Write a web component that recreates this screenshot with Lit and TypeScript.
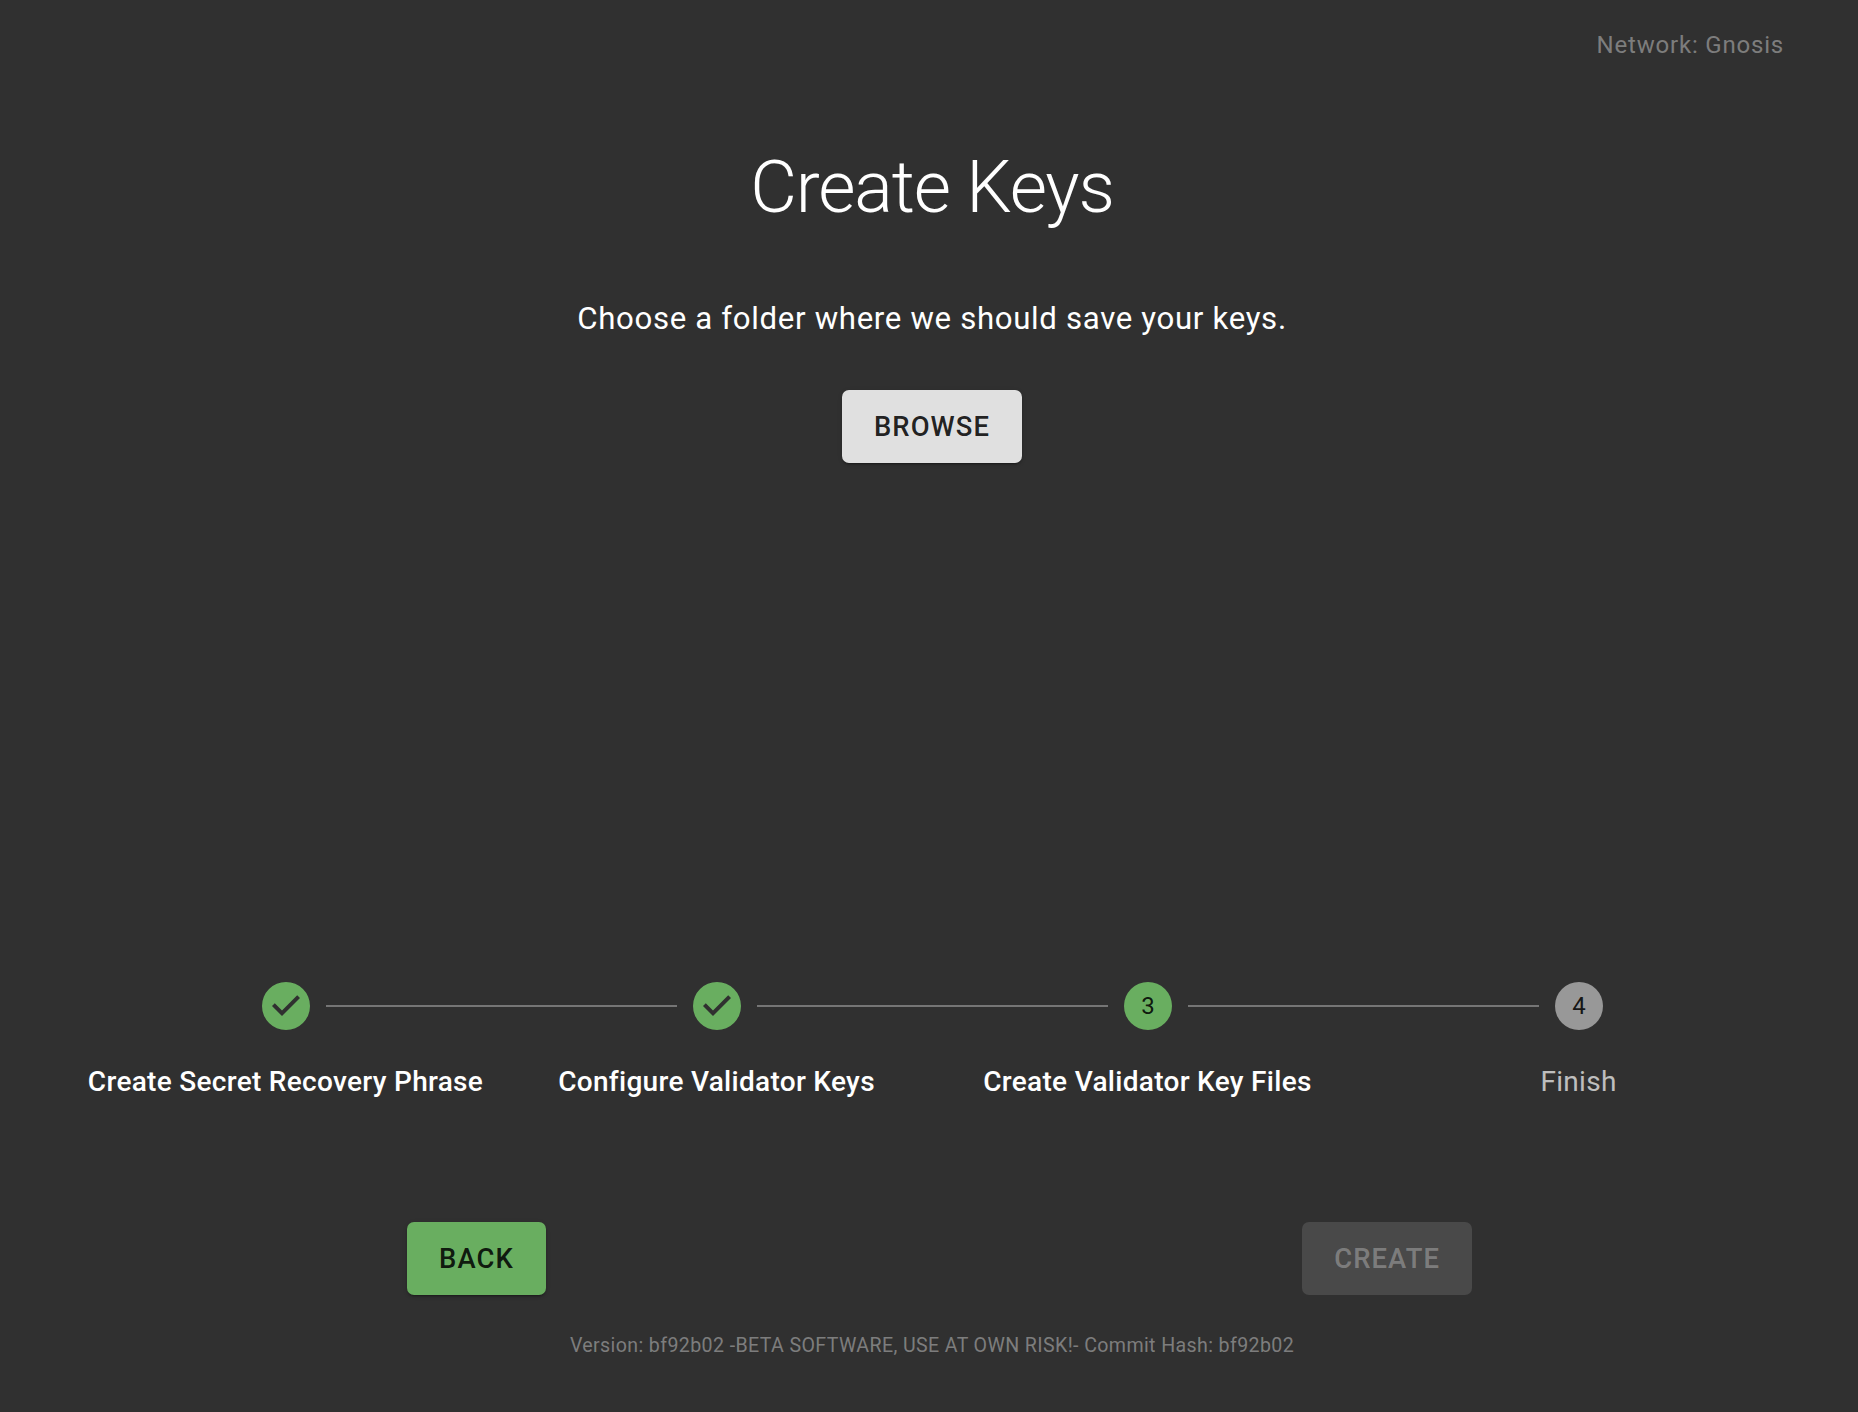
import { LitElement, html, css } from 'lit';
import { customElement } from 'lit/decorators.js';

const steps = [
  { label: 'Create Secret Recovery Phrase', state: 'done' },
  { label: 'Configure Validator Keys', state: 'done' },
  { label: 'Create Validator Key Files', state: 'active' },
  { label: 'Finish', state: 'todo' },
];

@customElement('app-root')
export class AppRoot extends LitElement {
  static styles = css`
    :host {
      display: block;
      height: 1412px;
      background: #303030;
      color: #fff;
      font-family: Roboto, sans-serif;
      overflow: hidden;
    }
    .page {
      height: 100%;
      box-sizing: border-box;
      display: flex;
      flex-direction: column;
      padding: 0 64px 0 70px;
    }
    .network {
      align-self: flex-end;
      margin: 28px 10px 0 0;
      font-size: 24px;
      line-height: 34px;
      letter-spacing: 0.8px;
      color: rgba(255, 255, 255, 0.38);
    }
    h1 {
      margin: 83px 0 0;
      text-align: center;
      font-size: 72px;
      line-height: 86px;
      font-weight: 300;
      letter-spacing: -1.15px;
    }
    .sub {
      margin: 66px 0 0;
      text-align: center;
      font-size: 31.2px;
      line-height: 44px;
      letter-spacing: 0.67px;
    }
    .browse-row {
      display: flex;
      justify-content: center;
      margin-top: 49px;
    }
    button {
      border: 0;
      border-radius: 7px;
      height: 73px;
      padding: 0 32px;
      font-family: Roboto, sans-serif;
      font-size: 27.4px;
      font-weight: 500;
      letter-spacing: 1.1px;
      box-shadow: 0 3px 1px -2px rgba(0,0,0,.2), 0 2px 2px 0 rgba(0,0,0,.14), 0 1px 5px 0 rgba(0,0,0,.12);
    }
    .browse { background: #e0e0e0; color: rgba(0, 0, 0, 0.87); }
    .back { background: #69ae60; color: rgba(0, 0, 0, 0.87); }
    .create {
      background: rgba(255, 255, 255, 0.12);
      color: rgba(255, 255, 255, 0.3);
      box-shadow: none;
    }
    .stepper {
      margin-top: auto;
      display: grid;
      grid-template-columns: repeat(4, 431px);
    }
    .head {
      display: flex;
      align-items: center;
      gap: 16px;
    }
    .seg {
      flex: 1;
      height: 2px;
      background: #757575;
    }
    .seg.none { background: none; }
    .head svg { width: 48px; height: 48px; display: block; }
    .done svg, .active svg { fill: #69ae60; }
    .todo svg { fill: rgba(255, 255, 255, 0.5); }
    .head text {
      font-family: Roboto, sans-serif;
      font-size: 12px;
      fill: rgba(0, 0, 0, 0.87);
      text-anchor: middle;
    }
    .label {
      margin-top: 32px;
      text-align: center;
      font-size: 28px;
      line-height: 40px;
      letter-spacing: 0.3px;
      white-space: nowrap;
      font-weight: 500;
    }
    .todo .label {
      font-weight: 400;
      color: rgba(255, 255, 255, 0.7);
    }
    .actions {
      margin: 120px 0 0 337px;
      width: 1065px;
      display: flex;
      justify-content: space-between;
    }
    .footer {
      margin: 37px 0 52px;
      text-align: center;
      font-size: 19.6px;
      line-height: 28px;
      letter-spacing: 0.38px;
      color: rgba(255, 255, 255, 0.38);
    }
  `;

  private icon(state: string, n: number) {
    if (state === 'done') {
      return html`<svg viewBox="0 0 24 24"><path d="M12 0a12 12 0 1 0 0 24 12 12 0 0 0 0-24zm-2 17l-5-5 1.4-1.4 3.6 3.6 7.6-7.6L19 8l-9 9z"></path></svg>`;
    }
    return html`<svg viewBox="0 0 24 24"><circle cx="12" cy="12" r="12"></circle><text x="12" y="16.2">${n}</text></svg>`;
  }

  render() {
    return html`
      <div class="page">
        <div class="network">Network: Gnosis</div>
        <h1>Create Keys</h1>
        <p class="sub">Choose a folder where we should save your keys.</p>
        <div class="browse-row"><button class="browse">BROWSE</button></div>
        <div class="stepper">
          ${steps.map(
            (s, i) => html`
              <div class=${s.state}>
                <div class="head">
                  <div class="seg ${i === 0 ? 'none' : ''}"></div>
                  ${this.icon(s.state, i + 1)}
                  <div class="seg ${i === steps.length - 1 ? 'none' : ''}"></div>
                </div>
                <div class="label">${s.label}</div>
              </div>
            `
          )}
        </div>
        <div class="actions">
          <button class="back">BACK</button>
          <button class="create">CREATE</button>
        </div>
        <div class="footer">Version: bf92b02 -BETA SOFTWARE, USE AT OWN RISK!- Commit Hash: bf92b02</div>
      </div>
    `;
  }
}
